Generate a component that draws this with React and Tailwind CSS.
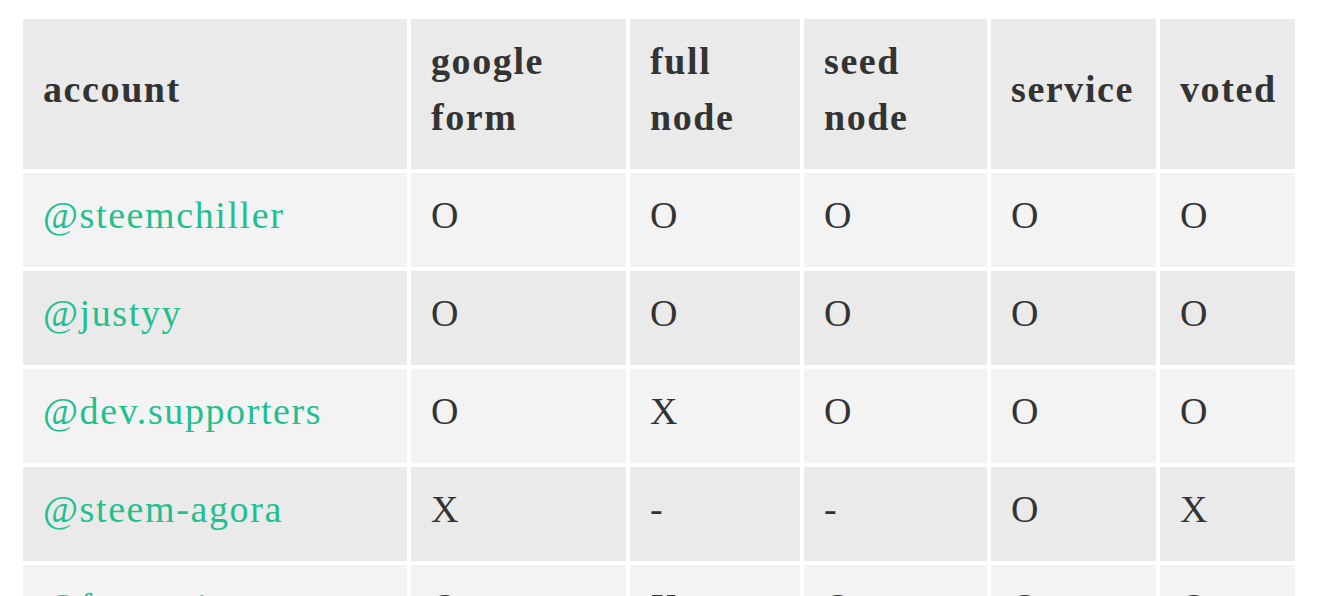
import React from 'react'

const columns = [
  { label: 'account', width: 'w-[384px]' },
  { label: 'google form', width: 'w-[215px]' },
  { label: 'full node', width: 'w-[170px]' },
  { label: 'seed node', width: 'w-[183px]' },
  { label: 'service', width: 'w-[165px]' },
  { label: 'voted', width: 'w-[135px]' },
]

const rows = [
  ['@steemchiller', 'O', 'O', 'O', 'O', 'O'],
  ['@justyy', 'O', 'O', 'O', 'O', 'O'],
  ['@dev.supporters', 'O', 'X', 'O', 'O', 'O'],
  ['@steem-agora', 'X', '-', '-', 'O', 'X'],
  ['@fotomaitreya', 'O', 'X', 'O', 'O', 'O'],
]

const App = () => {
  return (
    <div className="min-h-screen bg-white pl-[19px] pt-[15px] font-['Liberation_Serif',serif] text-[38px] leading-[56px] tracking-[1.6px] text-[#333333]">
      <table className="w-[1280px] table-fixed border-separate border-spacing-[4px]">
        <thead>
          <tr>
            {columns.map((col) => (
              <th
                key={col.label}
                className={`${col.width} bg-[#eaeaea] pl-[20px] pr-[12px] pt-[14px] pb-[24px] text-left align-middle font-bold`}
              >
                {col.label}
              </th>
            ))}
          </tr>
        </thead>
        <tbody>
          {rows.map((row, i) => (
            <tr key={row[0]} className={i % 2 === 0 ? 'bg-[#f3f3f3]' : 'bg-[#eaeaea]'}>
              {row.map((cell, j) => (
                <td key={j} className="pl-[20px] pr-[12px] pt-[14px] pb-[24px] align-middle">
                  {j === 0 ? (
                    <a href="#" className="text-[#1fbf8f]">{cell}</a>
                  ) : (
                    cell
                  )}
                </td>
              ))}
            </tr>
          ))}
        </tbody>
      </table>
    </div>
  )
}

export default App
